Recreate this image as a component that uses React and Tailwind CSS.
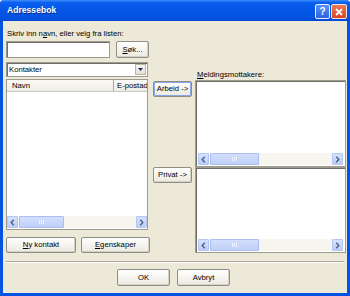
import React from "react";

const FONT = "font-['Liberation_Sans',Arial,sans-serif]";

function Arrow({ dir }) {
  return (
    <div className="w-[11px] h-full flex items-center justify-center rounded-[1px] border border-[#b3c5f0] bg-gradient-to-b from-[#d6e1fd] to-[#bccdf7]">
      <svg width="5" height="7" viewBox="0 0 5 7">
        {dir === "left" ? (
          <path d="M3.8 0.8 L1.2 3.5 L3.8 6.2" stroke="#4d6185" strokeWidth="1.4" fill="none" />
        ) : (
          <path d="M1.2 0.8 L3.8 3.5 L1.2 6.2" stroke="#4d6185" strokeWidth="1.4" fill="none" />
        )}
      </svg>
    </div>
  );
}

function HScroll({ thumb }) {
  return (
    <div className="h-[12px] flex items-stretch bg-[#f6f5f0]">
      <Arrow dir="left" />
      <div className="flex-1 flex items-stretch pl-[1px]">
        <div className={`${thumb} flex items-center justify-center rounded-[1px] border border-[#aabff0] bg-gradient-to-b from-[#d3defd] to-[#bfd0f8]`}>
          <div className="flex gap-[1px]">
            <div className="w-[1px] h-[4px] bg-[#eef3ff]" />
            <div className="w-[1px] h-[4px] bg-[#eef3ff]" />
            <div className="w-[1px] h-[4px] bg-[#eef3ff]" />
          </div>
        </div>
      </div>
      <Arrow dir="right" />
    </div>
  );
}

function Btn({ children, className = "" }) {
  return (
    <div
      className={`flex items-center justify-center rounded-[2px] border border-[#8f8e86] bg-gradient-to-b from-[#ffffff] to-[#ebe9df] shadow-[inset_-1px_-1px_0_#d4d2c6] text-[7.7px] leading-none text-black ${className}`}
    >
      {children}
    </div>
  );
}

export default function App() {
  return (
    <div className={`w-[350px] h-[296px] flex flex-col bg-[#0553e1] rounded-t-[4px] overflow-hidden ${FONT}`}>
      {/* Title bar */}
      <div className="h-[21px] flex items-center pl-[7px] pr-[3px] bg-[linear-gradient(180deg,#3d8ef8_0%,#0b60f0_12%,#0457e7_45%,#0352e1_85%,#0345d4_100%)]">
        <span className="text-white font-bold text-[8.6px] leading-none [text-shadow:1px_1px_0_#0a2a8a]">Adressebok</span>
        <div className="ml-auto mt-[2px] flex gap-[1px]">
          <div className="w-[15px] h-[15px] rounded-[2px] border border-[#e8efff] bg-gradient-to-b from-[#5b8ff5] to-[#2a62e3] flex items-center justify-center text-white font-bold text-[10px] leading-none">
            ?
          </div>
          <div className="w-[16px] h-[15px] rounded-[2px] border border-[#f2e6e0] bg-gradient-to-b from-[#ee7b55] to-[#d8441c] flex items-center justify-center">
            <svg width="8" height="8" viewBox="0 0 8 8">
              <path d="M1 1 L7 7 M7 1 L1 7" stroke="#ffffff" strokeWidth="1.8" />
            </svg>
          </div>
        </div>
      </div>

      {/* Body */}
      <div className="flex-1 mx-[3px] mb-[3px] bg-[#ece9d8] flex flex-col text-[7.7px] leading-[9px] text-black">
        <div className="flex items-start pl-[3px]">
          {/* Left column */}
          <div className="w-[144px] pt-[8px] flex flex-col">
            <div className="h-[9px] whitespace-nowrap pl-[1px]">
              Skriv inn n<span className="underline">a</span>vn, eller velg fra listen:
            </div>
            <div className="mt-[3px] flex h-[17px]">
              <div className="w-[104px] h-full bg-white border border-[#9e9c91] shadow-[inset_1px_1px_0_#6f6d64]" />
              <Btn className="ml-[6px] w-[33px] h-[17px]">
                <span>
                  <span className="underline">S</span>øk...
                </span>
              </Btn>
            </div>
            <div className="mt-[4px] w-[142px] h-[15px] flex bg-white border border-[#9e9c91] shadow-[inset_1px_1px_0_#6f6d64] p-[1px]">
              <div className="flex-1 pl-[1px] flex items-center">Kontakter</div>
              <div className="w-[11px] h-full flex items-center justify-center border border-[#b8b6aa] bg-gradient-to-b from-[#f6f5ef] to-[#e2e0d4]">
                <svg width="5" height="3" viewBox="0 0 5 3">
                  <path d="M0 0 L5 0 L2.5 3 Z" fill="#1b2a68" />
                </svg>
              </div>
            </div>
            <div className="mt-[2px] w-[142px] h-[151px] flex flex-col bg-white border border-[#9e9c91] pb-[1px]">
              <div className="h-[12px] flex bg-gradient-to-b from-[#fbfaf6] to-[#ecebe4] border-b border-[#cbc8bb]">
                <div className="w-[107px] pl-[5px] border-r border-[#aca899] flex items-center">Navn</div>
                <div className="flex-1 pl-[3px] overflow-hidden whitespace-nowrap flex items-center">E-postadresse</div>
              </div>
              <div className="flex-1" />
              <HScroll thumb="w-[45px]" />
            </div>
            <div className="mt-[7px] flex gap-[5px]">
              <Btn className="w-[70px] h-[16px]">
                <span>
                  <span className="underline">N</span>y kontakt
                </span>
              </Btn>
              <Btn className="w-[69px] h-[16px]">
                <span>
                  <span className="underline">E</span>genskaper
                </span>
              </Btn>
            </div>
          </div>

          {/* Middle column */}
          <div className="ml-[3px] w-[39px] pt-[60px] flex flex-col">
            <Btn className="h-[16px] border-[#1e3874] shadow-[inset_0_0_0_1px_#8aa6e6]">Arbeid -&gt;</Btn>
            <Btn className="mt-[70px] h-[16px]">Privat -&gt;</Btn>
          </div>

          {/* Right column */}
          <div className="ml-[3px] w-[151px] pt-[49px] flex flex-col">
            <div className="h-[10px] pl-[2px] whitespace-nowrap">
              <span className="underline">M</span>eldingsmottakere:
            </div>
            <div className="h-[87px] flex flex-col bg-white border border-[#9e9c91] shadow-[inset_1px_1px_0_#6f6d64] pt-[2px] px-[2px] pb-[1px]">
              <div className="flex-1" />
              <HScroll thumb="w-[49px]" />
            </div>
            <div className="h-[86px] flex flex-col bg-white border border-[#9e9c91] shadow-[inset_1px_1px_0_#6f6d64] pt-[2px] px-[2px] pb-[1px]">
              <div className="flex-1" />
              <HScroll thumb="w-[49px]" />
            </div>
          </div>
        </div>

        <div className="mt-[8px] ml-[3px] mr-[3px] h-[2px] border-t border-[#aca899] border-b border-b-white" />

        <div className="mt-[6px] pl-[114px] flex gap-[7px]">
          <Btn className="w-[53px] h-[17px]">OK</Btn>
          <Btn className="w-[53px] h-[17px]">Avbryt</Btn>
        </div>
      </div>
    </div>
  );
}
